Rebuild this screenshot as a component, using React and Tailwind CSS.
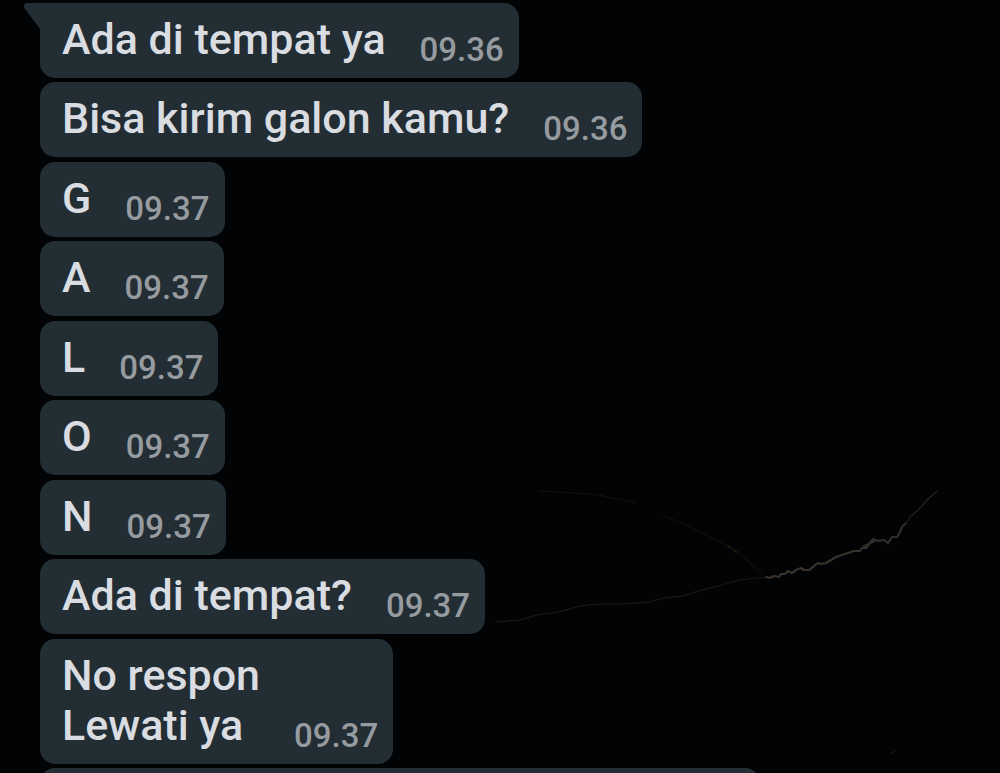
import React from 'react';

const messages = [
    { id: 1, lines: ['Ada di tempat ya'], time: '09.36', first: true },
    { id: 2, lines: ['Bisa kirim galon kamu?'], time: '09.36' },
    { id: 3, lines: ['G'], time: '09.37' },
    { id: 4, lines: ['A'], time: '09.37' },
    { id: 5, lines: ['L'], time: '09.37' },
    { id: 6, lines: ['O'], time: '09.37' },
    { id: 7, lines: ['N'], time: '09.37' },
    { id: 8, lines: ['Ada di tempat?'], time: '09.37' },
    { id: 9, lines: ['No respon', 'Lewati ya'], time: '09.37' },
];

// Faint crack in the dark wallpaper
const WallpaperCrack = () => (
    <svg
        className="absolute right-0 bottom-0 w-[520px] h-[313px] pointer-events-none"
        viewBox="480 460 520 313"
        fill="none"
        strokeLinecap="round"
        strokeLinejoin="round"
        aria-hidden="true"
    >
        <path d="M495 622 L520 620 L537 615 L558 612 L580 606 L598 604 L625 604 L650 602 L664 598 L683 596 L698 591 L718 586" stroke="#1b1c1b" strokeWidth="1.2" />
        <path d="M718 586 L740 580 L756 578 L768 577" stroke="#171614" strokeWidth="1" />
        <path d="M540 491 L560 492 L575 493 L598 495 L618 499 L636 503" stroke="#121312" strokeWidth="1" />
        <path d="M662 515 L674 520 L690 527 L712 538 L728 546 L738 552 L750 563 L764 575" stroke="#151411" strokeWidth="1" />
        <path d="M728 546 L731 548 M734 550 L736 552" stroke="#2b2414" strokeWidth="1.2" />
        <path d="M766 577 L770 578 L774 576 L779 577 L781 574 L785 574 L788 571 L792 573 L796 570 L801 568 L804 570 L809 570 L813 567 L815 565 L818 563 L821 564 L826 563 L831 560 L836 557 L842 555 L848 553 L854 551 L860 551 L862 548 L866 548 L869 544 L874 541" stroke="#37322b" strokeWidth="2.2" />
        <path d="M864 546 L869 544 L873 539 L878 541 L884 540 L888 543 L892 537 L897 537 L900 532 L902 527 L906 523" stroke="#302d28" strokeWidth="2.2" />
        <path d="M906 523 L910 517 L917 511 L922 506 L928 499 L937 491" stroke="#24231f" strokeWidth="1.2" />
        <path d="M890 754 L895 751" stroke="#1b1c1b" strokeWidth="1" />
    </svg>
);

const BubbleTail = () => (
    <svg className="absolute top-0 -left-4 w-8 h-[26px]" viewBox="0 0 32 26" aria-hidden="true">
        <path d="M3 0 H32 V26 H16 L1 6 C-1 3 0 0 3 0 Z" fill="#222d34" />
    </svg>
);

const Message = ({ lines, time, first }) => (
    <li className="relative flex w-fit items-end gap-[34px] rounded-[15px] bg-[#222d34] pl-[22px] pr-[15px] pt-[11px] pb-[9px] odd:mb-1 even:mb-[5px]">
        {first && <BubbleTail />}
        <p className="relative mb-[5px] text-[43px] leading-[50px] font-medium text-[#d9dce0]">
            {lines.map((line) => (
                <span key={line} className="block">{line}</span>
            ))}
        </p>
        <time className="text-[33px] leading-[38px] font-medium text-[#969b9f]">{time}</time>
    </li>
);

const App = () => (
    <main className="relative h-screen overflow-hidden bg-[#010304] font-[Roboto,sans-serif]">
        <WallpaperCrack />
        <ul className="relative pt-[3px] pl-10 pr-10">
            {messages.map((message) => (
                <Message key={message.id} {...message} />
            ))}
            {/* Next message, mostly scrolled out of view */}
            <li className="h-[75px] w-full max-w-[720px] rounded-[15px] bg-[#222d34]" />
        </ul>
    </main>
);

export default App;
